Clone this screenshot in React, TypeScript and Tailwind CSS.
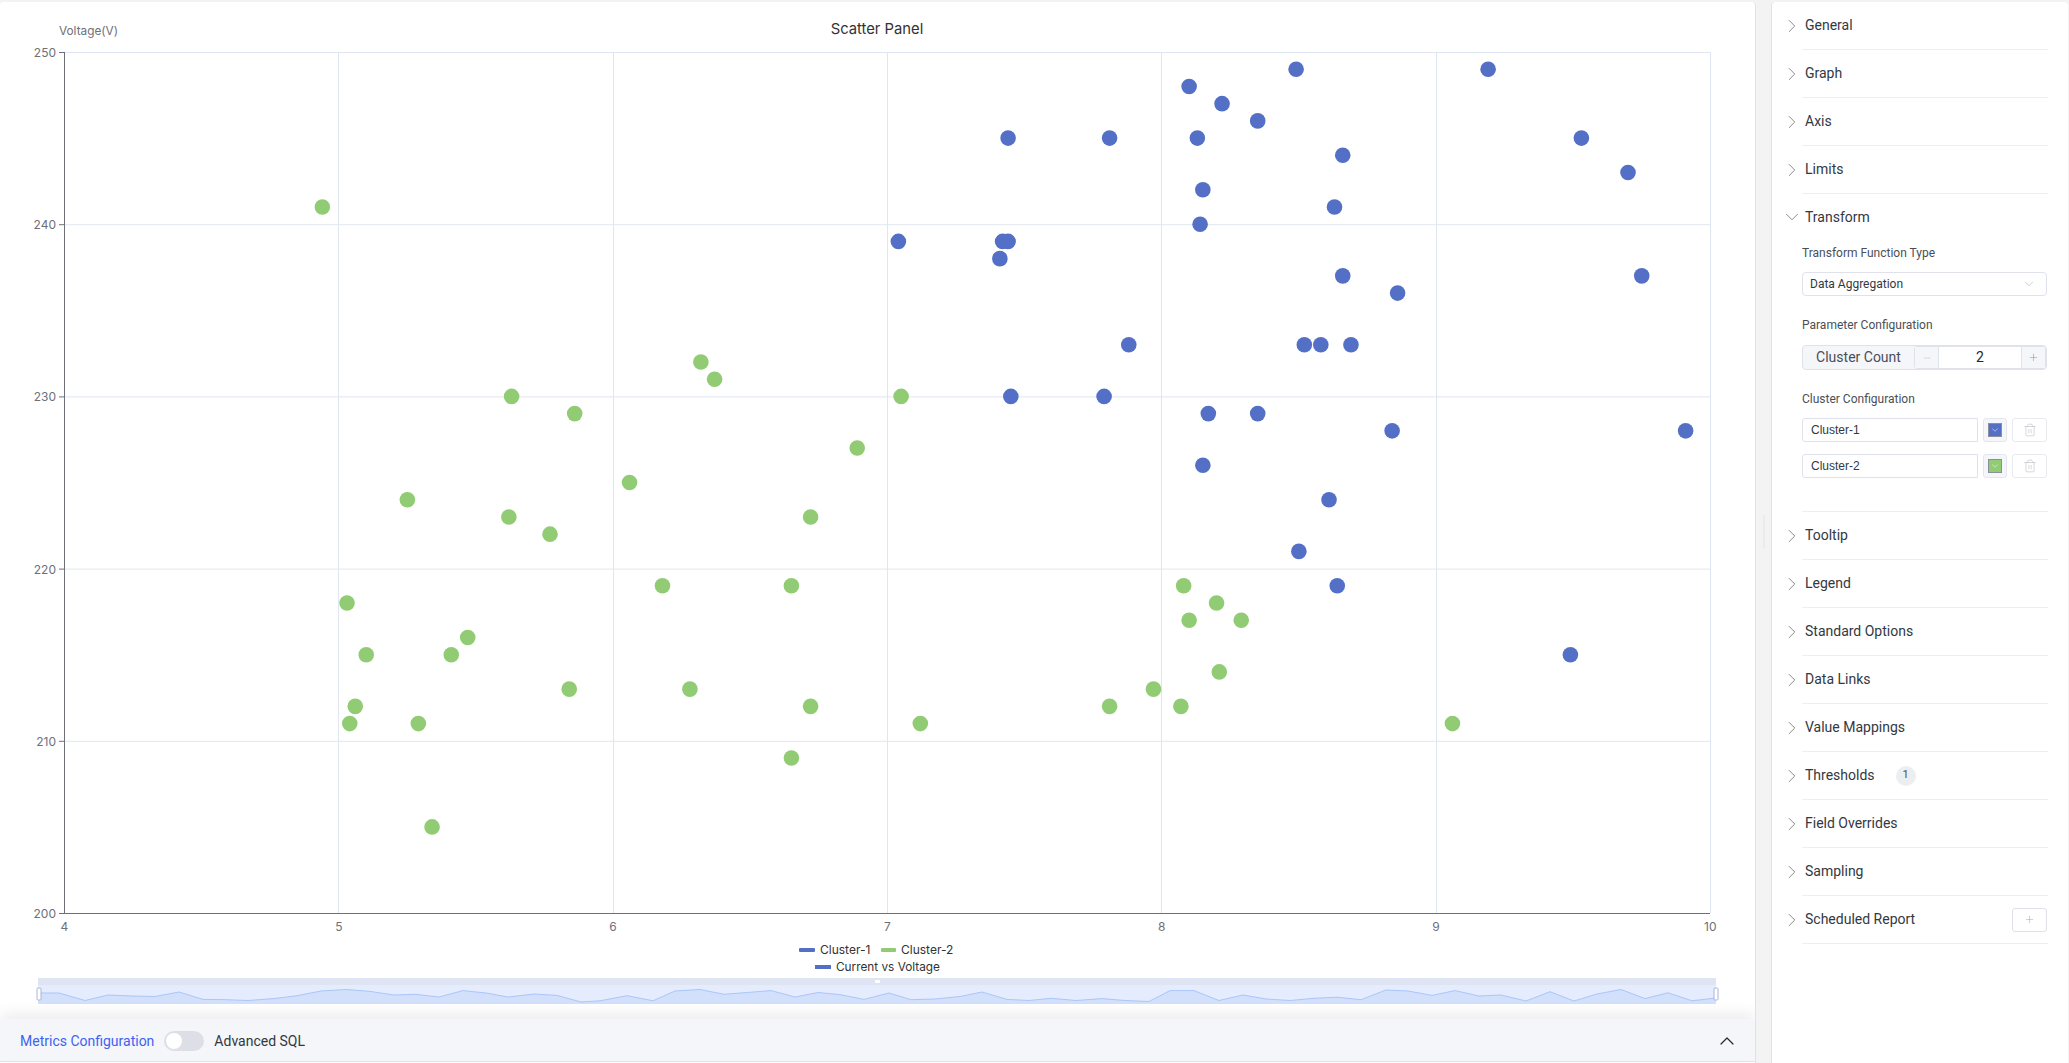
import React from 'react';
import { ChevronRight, ChevronDown, ChevronUp, Minus, Plus, Trash2 } from 'lucide-react';

const BLUE = '#5470c6';
const GREEN = '#91cc75';
const GRID = '#e0e6f1';
const AXIS = '#6e7079';
const CHART_FONT = 'Inter, sans-serif';

const cluster1 = [
  [8.49, 249], [9.19, 249], [8.1, 248], [8.22, 247], [8.13, 245], [7.44, 245], [7.81, 245], [9.53, 245],
  [8.35, 246], [8.66, 244], [9.7, 243], [8.15, 242], [8.63, 241], [7.04, 239], [7.44, 239], [7.42, 239],
  [7.41, 238], [8.14, 240], [8.66, 237], [9.75, 237], [8.86, 236], [7.88, 233], [8.52, 233], [8.58, 233],
  [8.69, 233], [7.45, 230], [7.79, 230], [8.17, 229], [8.35, 229], [8.84, 228], [9.91, 228], [8.15, 226],
  [8.61, 224], [8.5, 221], [8.64, 219], [9.49, 215],
];

const cluster2 = [
  [4.94, 241], [5.63, 230], [5.86, 229], [6.32, 232], [6.37, 231], [6.89, 227], [7.05, 230], [5.25, 224],
  [5.62, 223], [5.77, 222], [6.06, 225], [6.72, 223], [6.18, 219], [6.65, 219], [5.03, 218], [5.1, 215],
  [5.47, 216], [5.41, 215], [5.84, 213], [5.06, 212], [5.04, 211], [5.29, 211], [6.28, 213], [6.72, 212],
  [7.12, 211], [6.65, 209], [5.34, 205], [8.08, 219], [8.2, 218], [8.1, 217], [8.29, 217], [7.97, 213],
  [8.21, 214], [7.81, 212], [8.07, 212], [9.06, 211],
];

const sliderLine = [
  [38, 993], [59, 993], [85, 1000.5], [108, 995], [132, 996], [155, 996.5], [179, 992], [203, 999.4], [226, 999.7],
  [248, 1000.5], [274, 998.6], [297, 995.7], [321, 991], [346, 989.5], [370, 991.4], [394, 995], [415, 994.3],
  [439, 997], [463, 990.6], [486, 993], [508, 997], [534, 994], [557, 995.4], [581, 1002], [600, 1000.8],
  [627, 995.7], [653, 1000.8], [675, 991], [700, 989.5], [724, 994.3], [747, 992.5], [771, 990.6], [795, 997],
  [818, 992.5], [840, 994.6], [864, 999.4], [889, 993], [911, 999.7], [935, 999], [960, 996.5], [982, 992],
  [1007, 999.4], [1029, 1000.5], [1051, 998.3], [1076, 1000.5], [1102, 998.6], [1125, 1000.5], [1149, 1001.5],
  [1170, 990.6], [1194, 990.6], [1219, 1000.5], [1243, 995], [1266, 999], [1290, 1000.5], [1314, 998.3],
  [1337, 997.2], [1361, 999.7], [1386, 990], [1408, 991], [1432, 995.4], [1455, 990.6], [1479, 996], [1501, 995],
  [1526, 1001], [1550, 991.7], [1574, 1001], [1597, 994], [1621, 989.5], [1645, 998.6], [1668, 992.8], [1692, 1000.8],
  [1716, 998],
];

const toX = (v: number) => 64.5 + (v - 4) * 274.3;
const toY = (v: number) => 52 + (250 - v) * 17.22;

const xTicks = [4, 5, 6, 7, 8, 9, 10];
const yTicks = [200, 210, 220, 230, 240, 250];

function ScatterChart() {
  const line = sliderLine.map(([x, y]) => `${x},${y}`).join(' ');
  return (
    <svg width={1754} height={1017} viewBox="0 2 1754 1017" className="block shrink-0" style={{ fontFamily: CHART_FONT }}>
      <text x={877} y={34} textAnchor="middle" fontSize={14.8} fill="#333">Scatter Panel</text>
      <text x={59} y={35} fontSize={11.8} fill={AXIS}>Voltage(V)</text>

      {yTicks.slice(1).map((t) => (
        <line key={t} x1={64} x2={1710} y1={toY(t) + 0.5} y2={toY(t) + 0.5} stroke={GRID} />
      ))}
      {xTicks.slice(1).map((t) => (
        <line key={t} x1={Math.floor(toX(t)) + 0.5} x2={Math.floor(toX(t)) + 0.5} y1={52} y2={913} stroke={GRID} />
      ))}

      <line x1={64.5} x2={64.5} y1={52} y2={913.5} stroke={AXIS} />
      <line x1={64} x2={1710} y1={913.5} y2={913.5} stroke={AXIS} />
      {yTicks.map((t) => (
        <g key={t}>
          <line x1={59} x2={64} y1={toY(t) + 0.5} y2={toY(t) + 0.5} stroke={AXIS} />
          <text x={56} y={toY(t) + 5} textAnchor="end" fontSize={12} fill={AXIS}>{t}</text>
        </g>
      ))}
      {xTicks.map((t) => (
        <text key={t} x={toX(t)} y={931} textAnchor="middle" fontSize={12} fill={AXIS}>{t}</text>
      ))}

      {cluster1.map(([x, y], i) => (
        <circle key={i} cx={toX(x)} cy={toY(y)} r={7.8} fill={BLUE} />
      ))}
      {cluster2.map(([x, y], i) => (
        <circle key={i} cx={toX(x)} cy={toY(y)} r={7.8} fill={GREEN} />
      ))}

      <rect x={799} y={948} width={16} height={4} rx={1} fill={BLUE} />
      <text x={820} y={954} fontSize={12} fill="#333">Cluster-1</text>
      <rect x={881} y={948} width={15} height={4} rx={1} fill={GREEN} />
      <text x={901} y={954} fontSize={12} fill="#333">Cluster-2</text>
      <rect x={815} y={965} width={16} height={4} fill={BLUE} />
      <text x={836} y={971} fontSize={11.8} fill="#333">Current vs Voltage</text>

      <rect x={38} y={978} width={1678} height={7} fill="#dfe4f3" />
      <rect x={38} y={985} width={1678} height={19} fill="#e4ecfd" />
      <polygon points={`38,1004 ${line} 1716,1004`} fill="#d2e0fb" />
      <polyline points={line} fill="none" stroke="#abc6f8" strokeWidth={1} />
      <rect x={875} y={980} width={5} height={3} fill="#fff" />
      <rect x={37} y={988} width={4} height={12} rx={1} fill="#fff" stroke="#aab6d8" />
      <rect x={1714} y={988} width={4} height={12} rx={1} fill="#fff" stroke="#aab6d8" />
    </svg>
  );
}

function SectionRow({ label, children }: { label: string; children?: React.ReactNode }) {
  return (
    <div className="flex h-12 items-stretch">
      <div className="flex w-[30px] shrink-0 items-center pb-[1px] pl-[9px]">
        <ChevronRight size={22} strokeWidth={1} className="shrink-0 text-[#808080]" />
      </div>
      <div className="flex flex-1 items-center border-b border-[#eceef3] pl-[3px] text-[14px] text-[#33383f]">
        {children ? (
          <>
            <span>{label}</span>
            {children}
          </>
        ) : (
          label
        )}
      </div>
    </div>
  );
}

function ClusterInput({ name, color }: { name: string; color: string }) {
  return (
    <div className="flex h-[24px] items-stretch">
      <input
        readOnly
        defaultValue={name}
        className="h-full w-[176px] rounded-l-[3px] border border-[#dfe1ec] pl-[8px] text-[12px] text-[#33383f] outline-none"
        style={{ fontFamily: '"Liberation Sans", sans-serif' }}
      />
      <div className="ml-[5px] flex w-[24px] items-center justify-center rounded-[3px] border border-[#e4e6ee] bg-[#f4f6fa]">
        <div className={`flex h-[14px] w-[14px] items-center justify-center border border-[#8a8f99] ${color}`}>
          <ChevronDown size={10} strokeWidth={1.2} className="text-white" />
        </div>
      </div>
      <div className="ml-[5px] flex w-[35px] items-center justify-center rounded-[3px] border border-[#e8eaf0]">
        <Trash2 size={14} strokeWidth={1} className="text-[#b9bbc2]" />
      </div>
    </div>
  );
}

function TransformSection() {
  return (
    <div className="flex items-stretch">
      <div className="w-[30px] shrink-0 pl-[9px] pt-[12px]">
        <ChevronDown size={22} strokeWidth={1} className="text-[#808080]" />
      </div>
      <div className="flex-1 border-b border-[#eceef3]">
        <div className="flex h-12 items-center pb-[2px] pl-[3px] text-[14px] text-[#33383f]">Transform</div>
        <div className="-mt-[1px] flex h-6 items-center text-[12px] text-[#4a4f57]">Transform Function Type</div>
        <div className="mr-[1px] mt-[7px] flex h-[24px] items-center justify-between rounded-[4px] border border-[#dfe1ec] pl-[7px] pr-[10px] text-[12px] text-[#33383f]">
          <span>Data Aggregation</span>
          <ChevronDown size={14} strokeWidth={1} className="text-[#a8abb2]" />
        </div>
        <div className="mt-[17px] flex h-6 items-center text-[12px] text-[#4a4f57]">Parameter Configuration</div>
        <div className="mr-[1px] mt-[8px] flex h-[25px] items-stretch rounded-[4px] border border-[#dfe2ea] bg-[#f4f6fa]">
          <div className="flex w-[111px] items-center justify-center text-[14px] text-[#4a4f57]">Cluster Count</div>
          <div className="flex flex-1 items-stretch rounded-[3px] border border-[#dfe2ea] bg-white">
            <div className="flex w-[24px] items-center justify-center border-r border-[#dfe2ea] bg-[#f4f6fa]">
              <Minus size={10} strokeWidth={1.2} className="text-[#b9bbc2]" />
            </div>
            <div className="flex flex-1 items-center justify-center text-[14px] text-[#22262c]">2</div>
            <div className="flex w-[24px] items-center justify-center border-l border-[#dfe2ea] bg-[#f4f6fa]">
              <Plus size={11} strokeWidth={1.2} className="text-[#8f929a]" />
            </div>
          </div>
        </div>
        <div className="mt-[17px] flex h-6 items-center text-[12px] text-[#4a4f57]">Cluster Configuration</div>
        <div className="mt-[7px] flex flex-col gap-3 pb-[33px]">
          <ClusterInput name="Cluster-1" color="bg-[#5470c6]" />
          <ClusterInput name="Cluster-2" color="bg-[#91cc75]" />
        </div>
      </div>
    </div>
  );
}

export default function App() {
  return (
    <div
      className="flex h-[1063px] w-[2069px] overflow-hidden bg-[#f3f3f3] pt-[2px] text-[#33383f]"
      style={{ fontFamily: 'Roboto, sans-serif' }}
    >
      <div className="flex h-[1061px] w-[1756px] shrink-0 flex-col overflow-hidden rounded-t-[4px] border-r border-[#e2e2e2] bg-white">
        <ScatterChart />
        <div className="z-10 flex h-[43px] shrink-0 items-center border-b border-[#e2e2e2] bg-[#f4f6fa] pl-[20px] pr-[16px] pt-[2px] text-[14px] shadow-[0_-6px_14px_rgba(0,0,0,0.07)]">
          <span className="text-[#3d63f2]">Metrics Configuration</span>
          <div className="ml-[10px] flex h-[20px] w-[40px] items-center rounded-full bg-[#dcdfe6] pl-[2px]">
            <div className="h-[16px] w-[16px] rounded-full bg-white" />
          </div>
          <span className="ml-[10px] text-[#33383f]">Advanced SQL</span>
          <ChevronUp size={24} strokeWidth={1.2} className="ml-auto text-[#22262c]" />
        </div>
      </div>

      <div className="flex w-[15px] shrink-0 items-start justify-center pt-[513px]">
        <div className="h-[33px] w-[2px] bg-[#ebebeb]" />
      </div>

      <div className="mr-[1px] h-[1061px] flex-1 rounded-t-[4px] border-l border-[#e2e2e2] bg-white pr-[20px]">
        <SectionRow label="General" />
        <SectionRow label="Graph" />
        <SectionRow label="Axis" />
        <SectionRow label="Limits" />
        <TransformSection />
        <SectionRow label="Tooltip" />
        <SectionRow label="Legend" />
        <SectionRow label="Standard Options" />
        <SectionRow label="Data Links" />
        <SectionRow label="Value Mappings" />
        <SectionRow label="Thresholds">
          <span className="ml-[21px] flex h-[20px] w-[20px] items-center justify-center rounded-full bg-[#eceef2] text-[11px] text-[#4a4f57]">1</span>
        </SectionRow>
        <SectionRow label="Field Overrides" />
        <SectionRow label="Sampling" />
        <SectionRow label="Scheduled Report">
          <span className="ml-auto mr-[1px] flex h-[24px] w-[35px] items-center justify-center rounded-[3px] border border-[#dfe1e8]">
            <Plus size={11} strokeWidth={1.2} className="text-[#a8abb2]" />
          </span>
        </SectionRow>
      </div>
    </div>
  );
}
